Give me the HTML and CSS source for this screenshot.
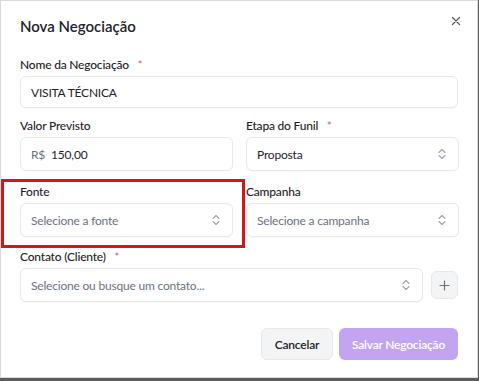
FILE: index.html
```html
<!DOCTYPE html>
<html lang="pt-BR">
<head>
<meta charset="utf-8">
<title>Nova Negociação</title>
<link rel="stylesheet" href="styles.css">
</head>
<body>
<div class="modal">
  <h1 class="title">Nova Negociação</h1>
  <button class="close" aria-label="Fechar">
    <svg width="10" height="10" viewBox="0 0 10 10"><path d="M1.5 1.5l7 7M8.5 1.5l-7 7" stroke="#4b5563" stroke-width="1.2" stroke-linecap="round" fill="none"/></svg>
  </button>

  <div class="form">
    <div class="field full">
      <label class="label">Nome da Negociação <span class="req">*</span></label>
      <div class="control h32"><span class="value">VISITA TÉCNICA</span></div>
    </div>

    <div class="row">
      <div class="field">
        <label class="label">Valor Previsto</label>
        <div class="control"><span class="prefix">R$</span><span class="value">150,00</span></div>
      </div>
      <div class="field">
        <label class="label">Etapa do Funil <span class="req">*</span></label>
        <div class="control select"><span class="value">Proposta</span>
          <svg class="chev" width="10" height="12" viewBox="0 0 10 12"><path d="M2 4.5l3-3 3 3M2 7.5l3 3 3-3" stroke="#9ca3af" stroke-width="1.1" fill="none" stroke-linecap="round" stroke-linejoin="round"/></svg>
        </div>
      </div>
    </div>

    <div class="row row3">
      <div class="field">
        <label class="label">Fonte</label>
        <div class="control select"><span class="ph">Selecione a fonte</span>
          <svg class="chev" width="10" height="12" viewBox="0 0 10 12"><path d="M2 4.5l3-3 3 3M2 7.5l3 3 3-3" stroke="#9ca3af" stroke-width="1.1" fill="none" stroke-linecap="round" stroke-linejoin="round"/></svg>
        </div>
      </div>
      <div class="field">
        <label class="label">Campanha</label>
        <div class="control select"><span class="ph">Selecione a campanha</span>
          <svg class="chev" width="10" height="12" viewBox="0 0 10 12"><path d="M2 4.5l3-3 3 3M2 7.5l3 3 3-3" stroke="#9ca3af" stroke-width="1.1" fill="none" stroke-linecap="round" stroke-linejoin="round"/></svg>
        </div>
      </div>
      <div class="highlight"></div>
    </div>

    <div class="field full">
      <label class="label">Contato (Cliente) <span class="req">*</span></label>
      <div class="contact-row">
        <div class="control select grow"><span class="ph">Selecione ou busque um contato...</span>
          <svg class="chev" width="10" height="12" viewBox="0 0 10 12"><path d="M2 4.5l3-3 3 3M2 7.5l3 3 3-3" stroke="#9ca3af" stroke-width="1.1" fill="none" stroke-linecap="round" stroke-linejoin="round"/></svg>
        </div>
        <button class="plus" aria-label="Novo contato">
          <svg width="11" height="11" viewBox="0 0 11 11"><path d="M5.5 1v9M1 5.5h9" stroke="#6b7280" stroke-width="1.2" stroke-linecap="round"/></svg>
        </button>
      </div>
    </div>
  </div>

  <div class="footer">
    <button class="btn cancel">Cancelar</button>
    <button class="btn save">Salvar Negociação</button>
  </div>
</div>
</body>
</html>
```

FILE: styles.css
```css
* { box-sizing: border-box; }
html, body {
  margin: 0;
  padding: 0;
  width: 479px;
  height: 381px;
  overflow: hidden;
}
body {
  background: #5b5b5b;
  font-family: Lato, "Noto Sans", sans-serif;
  color: #1f2937;
}
.modal {
  position: relative;
  width: 478px;
  height: 378px;
  background: #fff;
  border: 1px solid #d9d9d9;
  padding: 13px 19px 0 19px;
}
.title {
  margin: 0;
  font-size: 15px;
  line-height: 24px;
  font-weight: 600;
  color: #1f2328;
}
.close {
  position: absolute;
  top: 14px;
  right: 15px;
  width: 12px;
  height: 12px;
  padding: 0;
  border: 0;
  background: none;
  display: flex;
  align-items: center;
  justify-content: center;
}
.form {
  margin-top: 19px;
  display: flex;
  flex-direction: column;
  gap: 10px;
}
.row {
  position: relative;
  display: grid;
  grid-template-columns: 213px 213px;
  column-gap: 13px;
}
.row3 { margin-top: 3px; }
.row3 + .field { margin-top: 2px; }
.field {
  display: flex;
  flex-direction: column;
}
.label {
  font-size: 12px;
  letter-spacing: -0.2px;
  line-height: 16px;
  font-weight: 500;
  color: #1f2328;
  margin-bottom: 3px;
}
.req { color: #e0607a; margin-left: 6px; font-size: 11px; }
.control {
  height: 34px;
  border: 1px solid #e6e8eb;
  border-radius: 6px;
  background: #fff;
  display: flex;
  align-items: center;
  padding: 0 10px;
  font-size: 12px;
  letter-spacing: -0.2px;
  box-shadow: 0 1px 1px rgba(0,0,0,0.02);
}
.h32 { height: 32px; }
.value { color: #1f2328; }
.prefix { color: #6b7280; margin-right: 6px; }
.ph { color: #6b7280; }
.select { justify-content: space-between; padding-right: 11px; }
.chev { flex: none; }
.contact-row {
  display: flex;
  align-items: center;
  gap: 8px;
}
.grow { flex: 1; }
.plus {
  width: 27px;
  height: 28px;
  padding: 0;
  border: 1px solid #e6e8eb;
  border-radius: 6px;
  background: #f3f4f6;
  display: flex;
  align-items: center;
  justify-content: center;
}
.highlight {
  position: absolute;
  left: -19px;
  top: -5px;
  width: 244px;
  height: 69px;
  border: 3px solid #d0171c;
  pointer-events: none;
}
.footer {
  margin-top: 26px;
  display: flex;
  justify-content: flex-end;
  gap: 6px;
}
.btn {
  height: 32px;
  border-radius: 6px;
  font-family: inherit;
  font-size: 12px;
  letter-spacing: -0.2px;
  padding: 0;
  white-space: nowrap;
}
.cancel {
  width: 72px;
  background: #f3f4f6;
  border: 1px solid #e6e8eb;
  color: #1f2328;
  font-weight: 600;
}
.save {
  width: 119px;
  background: #c3a4f0;
  border: 0;
  color: #fff;
  font-weight: 600;
}
```
